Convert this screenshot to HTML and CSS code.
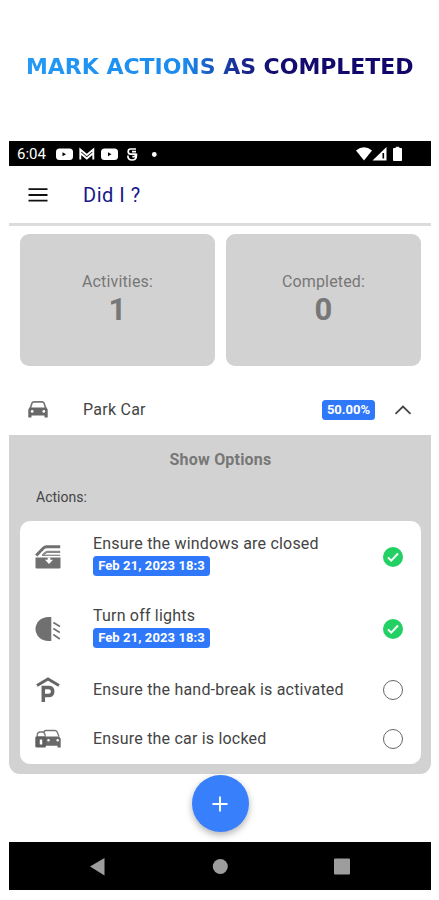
FILE: index.html
```html
<!DOCTYPE html>
<html lang="en">
<head>
<meta charset="utf-8">
<title>Did I ?</title>
<link rel="stylesheet" href="styles.css">
</head>
<body>
<h1 class="headline"><span>MARK ACTIONS AS COMPLETED</span></h1>
<main class="phone">
  <div class="status">
    <span class="clock">6:04</span>
    <svg class="notifications" width="104" height="16" viewBox="0 0 104 16">
      <rect x="0" y="2.5" width="17" height="11.5" rx="3.5" fill="#fff"/><path d="M6.500 6.300v4l3.500-2z" fill="#000"/>
      <path d="M24.300 13.500V3.500l6.500 5.500 6.500-5.500v10M24.300 7l6.500 5.500L37.300 7" fill="none" stroke="#fff" stroke-width="1.900"/>
      <rect x="45" y="2.500" width="17" height="11.500" rx="3.500" fill="#fff"/><path d="M52 6.300v4l3.500-2z" fill="#000"/>
      <path d="M80 3h-5.500q-2.300 0-2.300 2.500t2.300 2.700h4.800v2.500h-3M80 5.600h-4M71.900 9.500q-.2 4.500 4.200 4.500t4.300-4.500V7.500" fill="none" stroke="#fff" stroke-width="1.700"/>
      <circle cx="98.300" cy="8.500" r="2.400" fill="#fff"/>
    </svg>
    <svg class="signals" width="48" height="16" viewBox="0 0 48 16">
      <path d="M0 4.500Q8-2 16 4.500L8 14.500z" fill="#fff"/>
      <path d="M16.500 14.500L30.500 1v13.500z" fill="#fff"/><path d="M27.300 7v5.500" stroke="#000" stroke-width="1.600"/>
      <path d="M40 1.300h3v1.200h2.500v12h-8v-12H40z" fill="#fff" stroke="#fff" stroke-linejoin="round"/>
    </svg>
  </div>
  <header class="appbar">
    <svg width="20" height="14" viewBox="0 0 20 14"><path d="M.5 1.200h19M.5 7h19M.5 12.700h19" stroke="#111" stroke-width="1.800"/></svg>
    <span class="app-title">Did I ?</span>
  </header>
  <section class="stats">
    <div class="stat"><span class="stat-label">Activities:</span><strong>1</strong></div>
    <div class="stat"><span class="stat-label">Completed:</span><strong>0</strong></div>
  </section>
  <section class="activity">
    <svg class="activity-icon" width="20" height="17" viewBox="0 0 20 17">
      <path d="M2.200 7.500L4 2Q4.500.9 6 .9h8q1.500 0 2 1.100l1.800 5.500" fill="none" stroke="#777" stroke-width="1.700"/>
      <path d="M1.500 6.500h17L19.700 8.500v8h-3.200V14.500H3.500v2H.3v-8z" fill="#686868"/>
      <circle cx="4.200" cy="10.400" r="1.400" fill="#fff"/><circle cx="15.800" cy="10.400" r="1.400" fill="#fff"/>
    </svg>
    <span class="activity-name">Park Car</span>
    <span class="badge percent">50.00%</span>
    <svg class="chevron" width="18" height="10" viewBox="0 0 18 10"><path d="M1.500 8.800L9 1.600l7.500 7.200" fill="none" stroke="#444" stroke-width="1.800"/></svg>
  </section>
  <section class="panel">
    <div class="options">Show Options</div>
    <div class="actions-label">Actions:</div>
    <ul class="actions">
      <li class="action tall">
        <svg class="action-icon" width="26" height="26" viewBox="0 0 26 26">
          <path d="M1.200 11.500L8.500 4Q9.800 2.700 11.500 2.700h13.700" fill="none" stroke="#707070" stroke-width="3"/>
          <path d="M7.500 11.500l2.500-2.500q1-1.200 2.500-1.200h12.700" fill="none" stroke="#8a8a8a" stroke-width="2.200"/>
          <path d="M7 11.300h18.200" stroke="#8a8a8a" stroke-width="1.300"/>
          <path d="M.5 13.500h25v10q0 1-1 1h-23q-1 0-1-1z" fill="#707070"/>
          <path d="M12.700 13.500h2.600v2.300h2.700L14 20l-4-4.200h2.700z" fill="#fff"/>
        </svg>
        <div class="action-text"><span>Ensure the windows are closed</span><span class="badge date">Feb 21, 2023 18:3</span></div>
        <svg class="check" width="20" height="20" viewBox="0 0 20 20"><circle cx="10" cy="10" r="10" fill="#22d064"/><path d="M5 10.300l3.200 3.300L15 6.500" fill="none" stroke="#fff" stroke-width="1.900"/></svg>
      </li>
      <li class="action tall">
        <svg class="action-icon" width="26" height="26" viewBox="0 0 26 26">
          <path d="M16.300 1v24h-2.800C6 25 .5 19.500.5 13S6 1 13.500 1z" fill="#707070"/>
          <path d="M18.300 6.500l6.700 4M18.300 12.500l6.500 4M18.300 18.500l6.500 4.500" stroke="#707070" stroke-width="1.600"/>
        </svg>
        <div class="action-text"><span>Turn off lights</span><span class="badge date">Feb 21, 2023 18:3</span></div>
        <svg class="check" width="20" height="20" viewBox="0 0 20 20"><circle cx="10" cy="10" r="10" fill="#22d064"/><path d="M5 10.300l3.200 3.300L15 6.500" fill="none" stroke="#fff" stroke-width="1.900"/></svg>
      </li>
      <li class="action">
        <svg class="action-icon" width="26" height="26" viewBox="0 0 26 26">
          <path d="M2 8.500L13 2l11 6.500" fill="none" stroke="#666" stroke-width="2.800"/>
          <path d="M8.300 25V10.500h5.200q4.200 0 4.200 4t-4.200 4H8.300" fill="none" stroke="#666" stroke-width="3.500"/>
        </svg>
        <div class="action-text"><span>Ensure the hand-break is activated</span></div>
        <span class="radio"></span>
      </li>
      <li class="action">
        <svg class="action-icon" width="26" height="26" viewBox="0 0 26 26">
          <path d="M8.500 6.500Q9 4.500 11 4.500h9q1.500 0 2.300 1.800L24 10.500M2.200 12V9.500q0-3.500 3.300-3.500h1.500q3.200 0 3.200 4.500" fill="none" stroke="#777" stroke-width="1.300"/>
          <path d="M10 10.500h14l1.700 2v9h-3.200v-1.700H10z" fill="#6a6a6a"/>
          <rect x=".3" y="10.300" width="10.700" height="11.200" rx="1.500" fill="#606060"/>
          <circle cx="13.500" cy="14.300" r="1.200" fill="#fff"/><circle cx="22.700" cy="14.300" r="1.200" fill="#fff"/>
          <path d="M6 13.500v5" stroke="#fff" stroke-width="2.500"/>
        </svg>
        <div class="action-text"><span>Ensure the car is locked</span></div>
        <span class="radio"></span>
      </li>
    </ul>
  </section>
  <div class="fab-row">
    <button class="fab" aria-label="Add"><svg width="16" height="16" viewBox="0 0 16 16"><path d="M8 .5v15M.5 8h15" stroke="#fff" stroke-width="1.900"/></svg></button>
  </div>
  <nav class="system-nav">
    <svg width="422" height="48" viewBox="0 0 422 48">
      <g fill="#9d9d9d"><path d="M81 24.500l14.500-8.500v17.500z"/><circle cx="211.300" cy="24.500" r="7.500"/><rect x="325" y="16.500" width="16" height="16" rx="1"/></g>
    </svg>
  </nav>
</main>
</body>
</html>
```
FILE: styles.css
```css
* { box-sizing: border-box; }
body { margin: 0; width: 439px; height: 900px; overflow: hidden; background: #fff; font-family: Roboto, "Liberation Sans", sans-serif; color: #444; }
.headline { height: 141px; margin: 0; padding: 54px 0 0 26px; font: bold 22px/26px "DejaVu Sans", sans-serif; letter-spacing: -0.03px; white-space: nowrap; }
.headline span { display: inline-block; background: linear-gradient(90deg, #2499f5 0%, #1b8bee 41%, #1a2f96 54%, #130c70 64%, #110568 100%); background-clip: text; -webkit-background-clip: text; color: transparent; }
.phone { width: 422px; margin-left: 9px; }
.status { display: flex; align-items: center; height: 25px; padding: 0 27px 0 8px; background: #000; color: #fff; }
.clock { width: 39px; padding-top: 1px; font-size: 15px; line-height: 25px; white-space: nowrap; }
.signals { margin-left: auto; }
.appbar { display: flex; align-items: center; height: 60px; padding: 1px 0 0 19px; gap: 35px; border-bottom: 3px solid #dcdcdc; }
.app-title { color: #18188a; font-size: 20px; letter-spacing: 0.5px; }
.stats { display: grid; grid-template-columns: 1fr 1fr; gap: 11px; padding: 8px 10px 0 11px; }
.stat { display: flex; flex-direction: column; align-items: center; height: 132px; padding-top: 38px; border-radius: 9px; background: #d2d2d2; color: #777; }
.stat-label { font-size: 16px; line-height: 20px; letter-spacing: 0.15px; }
.stat strong { font-size: 31px; line-height: 36px; font-weight: 700; }
.activity { display: flex; align-items: center; height: 69px; padding: 18px 19px 0 19px; }
.activity-name { margin-left: 35px; font-size: 16px; letter-spacing: 0.25px; }
.badge { display: block; height: 20px; border-radius: 3.500px; background: #2f78fa; color: #fff; font-weight: 700; font-size: 13px; line-height: 19px; text-align: center; white-space: nowrap; }
.percent { width: 53px; margin-left: auto; margin-right: 19px; }
.panel { height: 339px; padding: 14px 10px 9px 11px; border-radius: 0 0 11px 11px; background: #d2d2d2; }
.options { height: 22px; line-height: 22px; text-align: center; font-weight: 700; font-size: 16px; letter-spacing: 0.2px; color: #777; }
.actions-label { height: 50px; padding: 16px 0 0 16px; font-size: 14px; line-height: 20px; }
.actions { list-style: none; height: 243px; margin: 0; padding: 0; border-radius: 10px; background: #fff; }
.action { display: flex; align-items: center; height: 49px; padding: 0 18px 0 15px; }
.tall { height: 72px; }
.action-text { flex: 1; margin-left: 32px; font-size: 16px; line-height: 22px; letter-spacing: 0.2px; white-space: nowrap; }
.action-text > span:first-child { display: block; }
.tall .action-text { padding-bottom: 6px; }
.date { width: 117px; margin-top: 1px; letter-spacing: 0.1px; }
.radio { width: 20px; height: 20px; border: 1.500px solid #666; border-radius: 50%; }
.fab-row { display: flex; justify-content: center; height: 68px; padding-top: 1px; }
.fab { display: flex; align-items: center; justify-content: center; width: 57px; height: 57px; padding: 0; border: 0; border-radius: 50%; background: #387ffc; box-shadow: 0 3px 7px rgba(0,0,0,.3); }
.system-nav { height: 48px; background: #000; }
.system-nav svg { display: block; }
```
